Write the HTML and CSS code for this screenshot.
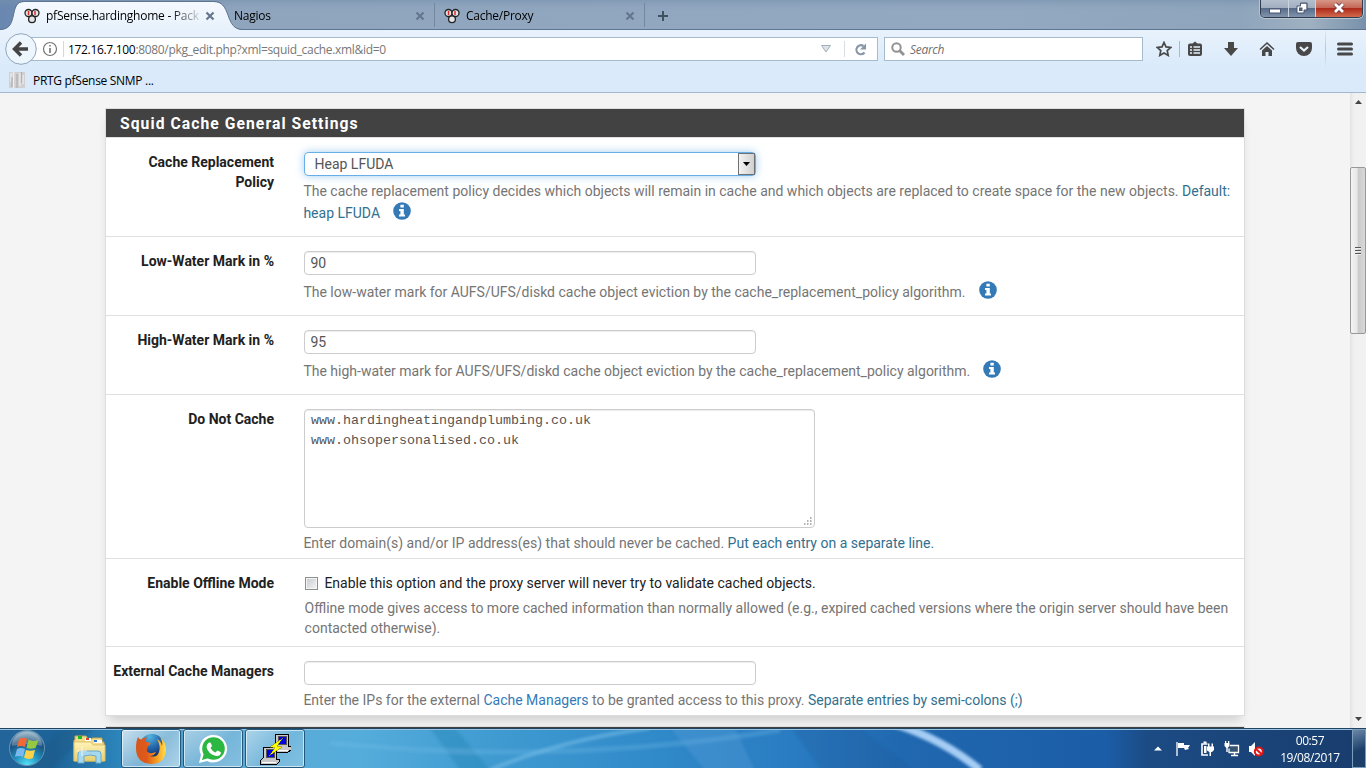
FILE: index.html
```html
<!DOCTYPE html>
<html lang="en">
<head>
    <meta charset="utf-8">
    <title>pfSense.hardinghome - Package: Squid</title>
    <link rel="stylesheet" href="styles.css">
</head>
<body>
<svg class="defs" width="0" height="0">
    <defs>
        <symbol id="pf" viewBox="0 0 16 16">
            <g fill="#e4e4e4" stroke="#222" stroke-width="1.3">
                <circle cx="4.5" cy="5" r="3.5"/>
                <circle cx="11.500" cy="5" r="3.5"/>
                <circle cx="8" cy="11.3" r="3.4"/>
            </g>
            <path d="M4.500 3v4M11 3v4" stroke="#d22" stroke-width="1.4"/>
        </symbol>
        <symbol id="close" viewBox="0 0 10 10">
            <path d="M1.5 1.5l7 7M8.5 1.5l-7 7" stroke="#64778c" stroke-width="2.2"/>
        </symbol>
        <symbol id="info" viewBox="0 0 18 18">
            <circle cx="9" cy="9" r="8.8" fill="#337ab7"/>
            <path d="M7.4 2.8h3.4v2.8H7.4zM6 7.1h4.8v5.5H12v2H6v-2h1.4V9.1H6z" fill="#fff"/>
        </symbol>
    </defs>
</svg>

<div class="tabs">
    <svg class="tab-shape" width="242" height="30">
        <defs>
            <linearGradient id="tabfill" x2="0" y2="1"><stop stop-color="#f4f9fe"/><stop offset="1" stop-color="#e7f1fb"/></linearGradient>
        </defs>
        <path d="M0 30C9 29 11 25 13 17C15 8 16 2 24 2H214C222 2 225 7 228 15C231 24 234 29 242 30Z" fill="url(#tabfill)"/>
        <path d="M0 29.5C9 29 11 25 13 17C15 8 16 1.500 24 1.500H214C222 1.500 225 7 228 15C231 24 234 29 242 29.500" fill="none" stroke="#5d7590"/>
    </svg>
    <div class="tab tab-active">
        <svg class="fav" width="16" height="16"><use href="#pf"/></svg>
        <span class="tab-title fade">pfSense.hardinghome - Pack</span>
        <svg width="10" height="10"><use href="#close"/></svg>
    </div>
    <div class="tab tab-nagios">
        <span class="tab-title">Nagios</span>
        <svg width="10" height="10"><use href="#close"/></svg>
    </div>
    <div class="tab tab-cache">
        <svg class="fav" width="16" height="16"><use href="#pf"/></svg>
        <span class="tab-title">Cache/Proxy</span>
        <svg width="10" height="10"><use href="#close"/></svg>
    </div>
    <svg class="plus" width="12" height="12"><path d="M6 1v10M1 6h10" stroke="#40525f" stroke-width="2"/></svg>
    <div class="win-buttons">
        <span class="win-min"><svg width="12" height="6"><rect x=".5" y="1" width="11" height="4" fill="#fff" stroke="#4a5670"/></svg></span>
        <span class="win-max"><svg width="12" height="12"><path d="M4.500 1H11V8H8V11H1V4H4.500Z" fill="#fff" stroke="#4a5670"/><path d="M4 1.500h7v7" fill="none" stroke="#4a5670" stroke-width=".6"/><rect x="3.500" y="6" width="2.500" height="2.500" fill="#5d6d88" stroke="#4a5670"/></svg></span>
        <span class="win-close"><svg width="14" height="12"><path d="M3 2l8 8M11 2l-8 8" stroke="#6d3640" stroke-width="4.500"/><path d="M3 2l8 8M11 2l-8 8" stroke="#fff" stroke-width="2.800"/></svg></span>
    </div>
</div>

<div class="nav">
    <div class="back">
        <svg width="32" height="32"><circle cx="16" cy="16" r="15.300" fill="#edf5fd" stroke="#8fa6bd"/><path d="M23 16H10M16 9.500L9.500 16L16 22.500" fill="none" stroke="#444" stroke-width="3.400"/></svg>
    </div>
    <div class="urlbar">
        <svg class="identity" width="16" height="16"><circle cx="8" cy="8" r="6.500" fill="none" stroke="#737373" stroke-width="1.200"/><path d="M8 4v1.600M8 7v5" stroke="#737373" stroke-width="1.600"/></svg>
        <span class="url"><b>172.16.7.100</b>:8080/pkg_edit.php?xml=squid_cache.xml&amp;id=0</span>
        <svg class="history" width="10" height="8"><path d="M.5 .5h9L5 7z" fill="#dce2e8" stroke="#a3aeba"/></svg>
        <span class="reload"><svg width="13" height="13"><path d="M10.500 9.500A4.500 4.500 0 1 1 9.500 3" fill="none" stroke="#8797a8" stroke-width="2.200"/><path d="M12 .5v6H6z" fill="#8797a8"/></svg></span>
    </div>
    <div class="search">
        <svg width="15" height="15"><circle cx="5.500" cy="5.500" r="4.200" fill="none" stroke="#929292" stroke-width="2"/><path d="M8.500 8.500l4.500 4.500" stroke="#929292" stroke-width="2.800"/></svg>
        <span>Search</span>
    </div>
    <div class="tools">
        <svg width="16" height="16"><path d="M8 1.500l2 4.400 4.800.5-3.600 3.200 1 4.800L8 12l-4.200 2.400 1-4.800L1.200 6.400 6 5.900z" fill="none" stroke="#484848" stroke-width="1.700"/></svg>
        <i class="tool-sep"></i>
        <svg width="16" height="16"><path d="M3 2.500h2.500L8 .5l2.500 2H13a2 2 0 0 1 2 2V13a2 2 0 0 1-2 2H3a2 2 0 0 1-2-2V4.500a2 2 0 0 1 2-2z" fill="#484848"/><path d="M3 6h2M6.500 6h6.500M3 9h2M6.500 9h6.500M3 12h2M6.500 12h6.500" stroke="#e5f0fa" stroke-width="1.600"/></svg>
        <svg width="16" height="16"><path d="M5 1h6v6h4l-7 8-7-8h4z" fill="#484848"/></svg>
        <svg width="16" height="16"><path d="M1 8.500l7-6.500 7 6.500" fill="none" stroke="#484848" stroke-width="1.500"/><path d="M3 9.500l5-4.500L13 9.500V15H9.500v-4h-3v4H3z" fill="#484848"/></svg>
        <svg width="18" height="16"><path d="M3 1h12a2 2 0 0 1 2 2v4a8 8 0 0 1-16 0V3a2 2 0 0 1 2-2z" fill="#484848"/><path d="M5 6l4 3.600L13 6" fill="none" stroke="#e8f2fb" stroke-width="2.200"/></svg>
        <i class="tool-sep tall"></i>
        <svg width="16" height="16"><path d="M1.500 3h13M1.500 8h13M1.500 13h13" stroke="#484848" stroke-width="3" stroke-linecap="round"/></svg>
    </div>
</div>

<div class="bookmarks">
    <svg width="17" height="16"><rect width="16" height="16" fill="#d0d0d0"/><path d="M2 1v9M4.500 0v16M11 1v13M14 3v9" stroke="#eee" stroke-width="1.300"/><path d="M3 5v10M8 2v14M12.500 0v11" stroke="#b0b0b0" stroke-width="1.200"/></svg>
    <span>PRTG pfSense SNMP ...</span>
</div>

<div class="viewport">
    <div class="page">
        <div class="panel">
            <h2>Squid Cache General Settings</h2>
            <div class="row row-policy">
                <label>Cache Replacement Policy</label>
                <div class="field">
                    <div class="control select focus">Heap LFUDA<span class="arrow"><svg width="7" height="4"><path d="M0 0h7L3.500 4z"/></svg></span></div>
                    <p class="help">The cache replacement policy decides which objects will remain in cache and which objects are replaced to create space for the new objects. <em>Default:</em><br><em>heap LFUDA</em><svg class="info" width="18" height="18"><use href="#info"/></svg></p>
                </div>
            </div>
            <div class="row row-mark">
                <label>Low-Water Mark in %</label>
                <div class="field">
                    <div class="control">90</div>
                    <p class="help">The low-water mark for AUFS/UFS/diskd cache object eviction by the cache_replacement_policy algorithm.<svg class="info" width="18" height="18"><use href="#info"/></svg></p>
                </div>
            </div>
            <div class="row row-mark">
                <label>High-Water Mark in %</label>
                <div class="field">
                    <div class="control">95</div>
                    <p class="help">The high-water mark for AUFS/UFS/diskd cache object eviction by the cache_replacement_policy algorithm.<svg class="info" width="18" height="18"><use href="#info"/></svg></p>
                </div>
            </div>
            <div class="row row-nocache">
                <label>Do Not Cache</label>
                <div class="field">
                    <div class="control area">www.hardingheatingandplumbing.co.uk<br>www.ohsopersonalised.co.uk
                        <svg class="grip" width="9" height="9"><path d="M7 1h1.500M4 4h1.500M7 4h1.500M1 7h1.500M4 7h1.500M7 7h1.500" stroke="#999" stroke-width="1.500"/></svg>
                    </div>
                    <p class="help">Enter domain(s) and/or IP address(es) that should never be cached. <em>Put each entry on a separate line.</em></p>
                </div>
            </div>
            <div class="row row-offline">
                <label>Enable Offline Mode</label>
                <div class="field">
                    <div class="check"><span class="box"></span>Enable this option and the proxy server will never try to validate cached objects.</div>
                    <p class="help">Offline mode gives access to more cached information than normally allowed (e.g., expired cached versions where the origin server should have been<br>contacted otherwise).</p>
                </div>
            </div>
            <div class="row row-managers">
                <label>External Cache Managers</label>
                <div class="field">
                    <div class="control"></div>
                    <p class="help">Enter the IPs for the external <a>Cache Managers</a> to be granted access to this proxy. <em>Separate entries by semi-colons (;)</em></p>
                </div>
            </div>
        </div>
        <div class="panel-next"></div>
    </div>
    <div class="scrollbar">
        <svg width="7" height="4"><path d="M0 4h7L3.500 0z" fill="#444"/></svg>
        <div class="thumb"><i></i><i></i><i></i></div>
        <svg class="down" width="7" height="4"><path d="M0 0h7L3.500 4z" fill="#444"/></svg>
    </div>
</div>

<div class="taskbar">
    <svg class="wallpaper" width="1366" height="40">
        <defs>
            <linearGradient id="wall">
                <stop stop-color="#23659b"/><stop offset=".04" stop-color="#1d6398"/><stop offset=".09" stop-color="#2d87bd"/><stop offset=".15" stop-color="#5fa9d2"/>
                <stop offset=".26" stop-color="#55addb"/><stop offset=".36" stop-color="#409bd1"/><stop offset=".49" stop-color="#2f88c8"/><stop offset=".58" stop-color="#2a7cc2"/>
                <stop offset=".66" stop-color="#2068af"/><stop offset=".81" stop-color="#1b5da7"/><stop offset=".84" stop-color="#1c4b84"/><stop offset="1" stop-color="#183c6c"/>
            </linearGradient>
            <filter id="soft" x="-20%" y="-50%" width="140%" height="200%"><feGaussianBlur stdDeviation="1.600"/></filter>
        </defs>
        <rect width="1366" height="40" fill="url(#wall)"/>
        <g filter="url(#soft)" fill="none">
            <path d="M20 42L64 0h30L50 42z" fill="#16547f" opacity=".35"/>
            <path d="M430 0l30 42h30L455 0z" fill="#237fb0" opacity=".35"/>
            <path d="M490 42Q560 12 650 0" stroke="#8acaf0" stroke-width="4" opacity=".45"/>
            <path d="M330 15Q560 38 780 2" stroke="#75bce8" stroke-width="5" opacity=".3"/>
            <path d="M670 0l35 42h50L735 0z" fill="#68a8de" opacity=".25"/>
            <path d="M792 0l30 42h90L860 0z" fill="#175899" opacity=".25"/>
            <path d="M895 -4Q944 12 980 42" stroke="#a6cdf4" stroke-width="8"/>
        </g>
    </svg>
    <div class="start">
        <svg width="38" height="38">
            <defs><radialGradient id="orb" cx=".5" cy="1" r=".95"><stop stop-color="#59e6fb"/><stop offset=".4" stop-color="#1f8fbd"/><stop offset=".75" stop-color="#1b4f7c"/><stop offset="1" stop-color="#87a9c0"/></radialGradient></defs>
            <circle cx="19" cy="19" r="17.500" fill="url(#orb)" stroke="#6994b3"/>
            <path d="M4 17a15 14 0 0 1 30 0Q18 13 4 17z" fill="#fff" opacity=".25"/>
            <path d="M11 10q4-2.500 8 0l-2 8q-4-2-8 0z" fill="#ef6a35"/>
            <path d="M20.500 10.500q4 2.500 10 .5l-3 8q-5 1.500-9 0z" fill="#96c942"/>
            <path d="M9 20q4-2 8 0l-2 8q-4-2-8 0z" fill="#79b9f0"/>
            <path d="M18 21q4 1.500 9 0l-2 8q-5 2-9-.5z" fill="#fbd149"/>
        </svg>
    </div>
    <svg class="explorer" width="34" height="32">
        <defs><linearGradient id="folder" x2="0" y2="1"><stop stop-color="#fff3b8"/><stop offset="1" stop-color="#e7cf70"/></linearGradient></defs>
        <path d="M2 6V2h11l2 3h4V4h10v4h2v19H1V6z" fill="#f2dc8c" stroke="#c5a64b"/>
        <rect x="5" y="2" width="4" height="3" fill="#19b92e"/><rect x="12" y="4" width="6" height="3" fill="#fff"/><rect x="13" y="4" width="3" height="2" fill="#d8412f"/><rect x="21" y="6" width="8" height="3" fill="#fff"/><rect x="21" y="6" width="3" height="2" fill="#277ad0"/>
        <path d="M1 8h17l2 3h12v16H1z" fill="url(#folder)" stroke="#dcc46c"/>
        <path d="M5 29V20q0-3 3-3h17q3 0 3 3v9h-5v-7q-6-2-12 0v7z" fill="#a7d9ee" stroke="#69aac9"/>
        <path d="M9 12v10M4 17h10" stroke="#fff" opacity=".8"/>
    </svg>
    <div class="task task-firefox">
        <svg width="32" height="32">
            <defs>
                <linearGradient id="fox" x1="1" x2="0"><stop stop-color="#ffe04d"/><stop offset=".3" stop-color="#f79e1f"/><stop offset=".65" stop-color="#e0591b"/><stop offset="1" stop-color="#d4581c"/></linearGradient>
                <radialGradient id="globe" cx=".4" cy=".1" r=".8"><stop stop-color="#52b7e0"/><stop offset=".5" stop-color="#2a70b4"/><stop offset="1" stop-color="#12306e"/></radialGradient>
            </defs>
            <circle cx="17" cy="13.500" r="12.500" fill="url(#globe)"/>
            <path d="M3 4q1 2 3 2.500 3-2.500 6-2-2 2-1 4.500l4 .5q1.500 1.500-2 3.500l-1 3q-1 3 3 4 3 .5 6-1-2 4-6 4 7 2 9-4 2-6-2-13 4 2 5 7 1-4-2-9 6 5 6 13Q30 31 16 31 1 30 1 15 1 8 3 4z" fill="url(#fox)"/>
        </svg>
    </div>
    <div class="task">
        <svg width="30" height="30"><path d="M1 29l2-8A13.800 13.800 0 1 1 9 27z" fill="#fff"/><circle cx="15.500" cy="14.500" r="11.300" fill="#2bb741"/><path d="M4 26l2-7 5 5z" fill="#2bb741"/><path d="M11 8.500q1.500-.5 2 1l1 2.500-1.500 2q1.500 3 5 4.500l1.800-2q3 .8 3.700 2-.5 4-5 3.500-8-2-9.500-9 .3-3.500 2.500-4.500z" fill="#fff"/></svg>
    </div>
    <div class="task">
        <svg width="32" height="32" shape-rendering="crispEdges">
            <path d="M17 1h12v12h3v4l-3 2H13v-4l3-2z" fill="#c8c8c8" stroke="#000"/><path d="M19 3h8v8h-8z" fill="#0000e0" stroke="#555"/>
            <path d="M5 14h12v12h3v3l-2 2H1v-3l3-3z" fill="#c8c8c8" stroke="#000"/><path d="M7 16h8v8H7z" fill="#0000e0" stroke="#555"/>
            <path d="M15 17h14M3 29h14" stroke="#fff"/>
            <path d="M24 5L11 14l5 1-6 8 13-9-5-1z" fill="#ff0" stroke="#770" stroke-width=".5"/>
        </svg>
    </div>
    <div class="tray">
        <svg width="8" height="5"><path d="M0 4.500h8L4 .5z" fill="#fff"/></svg>
        <svg width="16" height="16"><path d="M2 1v14" stroke="#fff" stroke-width="1.300"/><path d="M3 2h6v2h6l-2 3 1 1-4 1-1-2H3z" fill="#fff"/></svg>
        <svg width="16" height="16"><path d="M8.500 3H3v11h6" fill="none" stroke="#fff" stroke-width="1.600"/><path d="M4.500 .5h3v2h-3zM5 5h2.500v7H5zM8 5.500h7V9l-2 2h-1v4h-1.500v-4L8 9.500zM9 2.500h1.500v3H9zM12.500 2.500H14v3h-1.500z" fill="#fff"/></svg>
        <svg width="16" height="16"><path d="M6 4.500h8.500v7H5V7.500" fill="#385374" stroke="#fff" stroke-width="1.300"/><path d="M7 14.500h7M10.500 12v2M3 5v6" stroke="#fff" stroke-width="1.400"/><path d="M.5 2h5v3l-2 2H2.500l-2-2zM1 0h1.300v2H1zM4 0h1.300v2H4z" fill="#fff"/></svg>
        <svg width="16" height="16"><path d="M1 5h2l4-4v14l-4-4H1z" fill="#fff"/><circle cx="10.800" cy="10.500" r="4" fill="#e9eef5" stroke="#e01616" stroke-width="2"/><path d="M8 8l5.500 5" stroke="#e01616" stroke-width="2"/></svg>
    </div>
    <div class="clock">00:57<br>19/08/2017</div>
    <div class="show-desktop"></div>
</div>
</body>
</html>
```

FILE: styles.css
```css
* {
    box-sizing: border-box;
}

body {
    margin: 0;
    width: 1366px;
    height: 768px;
    overflow: hidden;
    display: flex;
    flex-direction: column;
    font-family: "Open Sans", sans-serif;
    font-size: 12px;
    color: #000;
}

svg {
    display: block;
    flex: none;
}

.defs {
    position: absolute;
}

/* tab strip */
.tabs {
    position: relative;
    height: 30px;
    flex: none;
    display: flex;
    align-items: center;
    background: linear-gradient(to right, #6987b0 0, #8fa5be 230px, #93a8c1 1000px, #8ea5bc 1240px, #9fb1c1 1310px, #7891ab 1366px);
    border-bottom: 1px solid #5d7590;
    box-shadow: inset 0 7px 8px -6px #7891ac;
}

.tab-shape {
    position: absolute;
    left: 0;
    top: 0;
}

.tab {
    position: relative;
    display: flex;
    align-items: center;
    height: 24px;
    padding-top: 2px;
}

.tab-title {
    flex: 1;
    white-space: nowrap;
    letter-spacing: -0.25px;
}

.fav {
    margin-right: 6px;
}

.tab-active {
    width: 234px;
    padding-left: 24px;
    padding-right: 19px;
}

.fade {
    margin-right: 4px;
    -webkit-mask-image: linear-gradient(to right, #000 124px, transparent 158px);
    mask-image: linear-gradient(to right, #000 124px, transparent 158px);
}

.tab-nagios,
.tab-cache {
    border-right: 1px solid #73879f;
}

.tab-nagios {
    width: 201px;
    padding-right: 9px;
}

.tab-cache {
    width: 210px;
    padding: 2px 9px 0 9px;
}

.plus {
    margin: 3px 0 0 12px;
}

.win-buttons {
    margin-left: auto;
    margin-right: 3px;
    align-self: flex-start;
    display: flex;
    height: 18px;
    border: 1px solid #303b4d;
    border-top: 0;
    border-radius: 0 0 5px 5px;
    overflow: hidden;
    box-shadow: 0 0 0 1px #b7c4d1;
}

.win-buttons span {
    display: flex;
    align-items: center;
    justify-content: center;
    background: linear-gradient(#b3bfcd 0, #a1afc0 45%, #566c8a 50%, #8194ad 100%);
    border-right: 1px solid #cbd4de;
}

.win-min { width: 28px; padding-top: 4px; }
.win-max { width: 27px; padding-bottom: 2px; }

.win-buttons .win-close {
    width: 46px;
    padding-bottom: 2px;
    border-right: 0;
    background: linear-gradient(#d79787 0, #c46757 45%, #ae2a1a 50%, #d26a4c 100%);
}

/* nav bar */
.nav {
    height: 38px;
    flex: none;
    display: flex;
    align-items: center;
    background: linear-gradient(#e8f2fc, #daeafa);
}

.back {
    position: relative;
    width: 32px;
    margin-left: 5px;
    z-index: 1;
}

.urlbar {
    display: flex;
    align-items: center;
    width: 847px;
    height: 24px;
    margin-left: -6px;
    background: #fff;
    border: 1px solid #a7bbcf;
}

.identity {
    margin: 0 5px 0 10px;
}

.url {
    height: 16px;
    line-height: 17px;
    padding-left: 4px;
    border-left: 1px solid #d8d8d8;
    color: #777;
    letter-spacing: -0.32px;
}

.url b {
    font-weight: normal;
    color: #000;
}

.history {
    margin-left: auto;
}

.reload {
    margin-left: 18px;
    width: 32px;
    height: 16px;
    padding: 2px 0 0 9px;
    margin-left: 13px;
    border-left: 1px solid #d8dde2;
}

.history + .reload {
    width: 33px;
}

.search {
    display: flex;
    align-items: center;
    width: 259px;
    height: 24px;
    margin-left: 6px;
    padding-left: 6px;
    background: #fff;
    border: 1px solid #a7bbcf;
    font-style: italic;
    color: #707070;
    letter-spacing: -0.3px;
}

.search span {
    margin: 1px 0 0 4px;
}

.tools {
    display: flex;
    align-items: center;
    margin-left: 13px;
    gap: 20px;
}

.tool-sep {
    width: 1px;
    height: 16px;
    margin: 0 -13px 0 -13px;
    background: #a7bbcf;
}

.tall {
    height: 36px;
    margin: 0 -9px 0 -8px;
    background: linear-gradient(#dae7f3, #b6c8da 50%, #dae7f3);
}

.bookmarks {
    display: flex;
    align-items: center;
    height: 25px;
    flex: none;
    padding-left: 9px;
    background: #daeafa;
    border-bottom: 1px solid #a3b8cd;
    letter-spacing: -0.3px;
}

.bookmarks span {
    margin-left: 7px;
}

/* page */
.viewport {
    display: flex;
    height: 635px;
    flex: none;
    background: #f4f4f4;
    overflow: hidden;
}

.page {
    width: 1350px;
    padding: 15px 0 0 105px;
    font-family: Roboto, sans-serif;
    font-size: 14px;
    line-height: 20px;
    color: #212121;
}

.panel {
    width: 1140px;
    height: 608px;
    border: 1px solid #ddd;
    background: #fff;
    box-shadow: 0 8px 10px -4px rgba(0, 0, 0, 0.16);
}

.panel h2 {
    margin: 0;
    height: 28px;
    padding-left: 14px;
    background: #424242;
    color: #fff;
    font-size: 15.7px;
    font-weight: 700;
    line-height: 29px;
    letter-spacing: 1.05px;
}

.row {
    display: flex;
    border-top: 1px solid #e0e0e0;
    padding-top: 14px;
}

.row-policy { height: 99px; }
.row-mark { height: 79px; }
.row-nocache { height: 164px; }
.row-offline { height: 88px; }
.row-managers { height: 69px; }

.row label {
    width: 168px;
    padding-left: 3px;
    text-align: right;
    font-weight: 700;
}

.row-policy label {
    padding-left: 30px;
}

.field {
    margin-left: 30px;
    white-space: nowrap;
}

.control {
    width: 452px;
    height: 24px;
    padding: 0 5.5px;
    border: 1px solid #ccc;
    border-radius: 4px;
    box-shadow: inset 0 1px 1px rgba(0, 0, 0, 0.075);
    line-height: 23px;
    color: #555;
}

.select {
    display: flex;
    justify-content: space-between;
    padding: 0 0 0 9.5px;
}

.focus {
    border-color: #66afe9;
    box-shadow: 0 0 8px rgba(102, 175, 233, 0.6);
}

.arrow {
    display: flex;
    align-items: center;
    justify-content: center;
    width: 17px;
    background: linear-gradient(to right, #f3f3f3, #d0d0d0);
    border: 1px solid #707070;
}

.area {
    position: relative;
    width: 511px;
    height: 119px;
    padding: 1px 6px;
    font-family: "Liberation Mono", monospace;
    font-size: 13.333px;
    line-height: 20px;
}

.grip {
    position: absolute;
    right: 2px;
    bottom: 1px;
}

.help {
    margin: 6px 0 0 -0.6px;
    color: #757575;
}

.help em {
    font-style: normal;
    color: #31708f;
}

.help a {
    color: #337ab7;
}

.row-policy .help {
    margin-top: 5px;
    line-height: 21px;
}

.row-mark .help {
    margin-top: 6px;
}

.row-managers .help,
.row-nocache .help {
    margin-top: 5px;
}

.info {
    display: inline-block;
    vertical-align: -2px;
    margin-left: 13px;
}

.check {
    display: flex;
    align-items: center;
    height: 20px;
}

.box {
    width: 13px;
    height: 13px;
    margin: 0 6.4px 0 1px;
    border: 1px solid #8e8f8f;
    background: linear-gradient(135deg, #c4cacf, #f5f5f5);
    box-shadow: inset 0 0 0 1px #f4f4f4;
}

.row-offline .help {
    margin: 5px 0 0 0.6px;
}

.panel-next {
    width: 1140px;
    height: 20px;
    margin-top: 10px;
    background: #424242;
    border: 1px solid #ddd;
}

.scrollbar {
    width: 16px;
    display: flex;
    flex-direction: column;
    align-items: center;
    padding: 7px 0;
    background: linear-gradient(to right, #e3e3e3, #f0f0f0 4px, #f2f2f2);
}

.thumb {
    width: 16px;
    height: 167px;
    margin-top: 63px;
    display: flex;
    flex-direction: column;
    align-items: center;
    justify-content: center;
    gap: 1px;
    padding-right: 1px;
    border: 1px solid #989898;
    border-radius: 2px;
    background: linear-gradient(to right, #f4f4f4, #e6e6e6 45%, #cacaca 50%, #d8d8d8);
}

.thumb i {
    width: 6px;
    height: 2px;
    background: #555;
    border-bottom: 1px solid #eee;
}

.down {
    margin-top: auto;
}

/* windows taskbar */
.taskbar {
    position: relative;
    display: flex;
    align-items: center;
    height: 40px;
    flex: none;
    box-shadow: inset 0 1px #1f4562, inset 0 2px #9cc3df;
}

.wallpaper {
    position: absolute;
    z-index: -1;
}

.start {
    margin-left: 8px;
}

.explorer {
    margin: 4px 14px 0 27px;
}

.task {
    width: 60px;
    height: 39px;
    margin: 1px 2px 0 0;
    display: flex;
    align-items: center;
    justify-content: center;
    border: 1px solid #24587d;
    border-radius: 3px;
    background: linear-gradient(135deg, rgba(255, 255, 255, 0.5), rgba(255, 255, 255, 0.15) 55%, rgba(255, 255, 255, 0.25));
    box-shadow: inset 0 0 0 1px rgba(255, 255, 255, 0.6);
}

.task-firefox {
    background: linear-gradient(135deg, rgba(255, 255, 255, 0.75), rgba(255, 255, 255, 0.35) 55%, rgba(255, 255, 255, 0.55));
}

.tray {
    margin-left: auto;
    display: flex;
    align-items: center;
    gap: 8.5px;
    padding-top: 1px;
}

.tray svg:first-child {
    margin-right: 4px;
}

.clock {
    width: 84px;
    margin: 1px 0 0 4px;
    color: #fff;
    line-height: 17px;
    text-align: center;
    letter-spacing: -0.4px;
}

.show-desktop {
    width: 14px;
    height: 39px;
    margin-top: 1px;
    border: 1px solid #7d9dbd;
    background: linear-gradient(160deg, #6b87a7, #1c3f6a 55%);
}
```
